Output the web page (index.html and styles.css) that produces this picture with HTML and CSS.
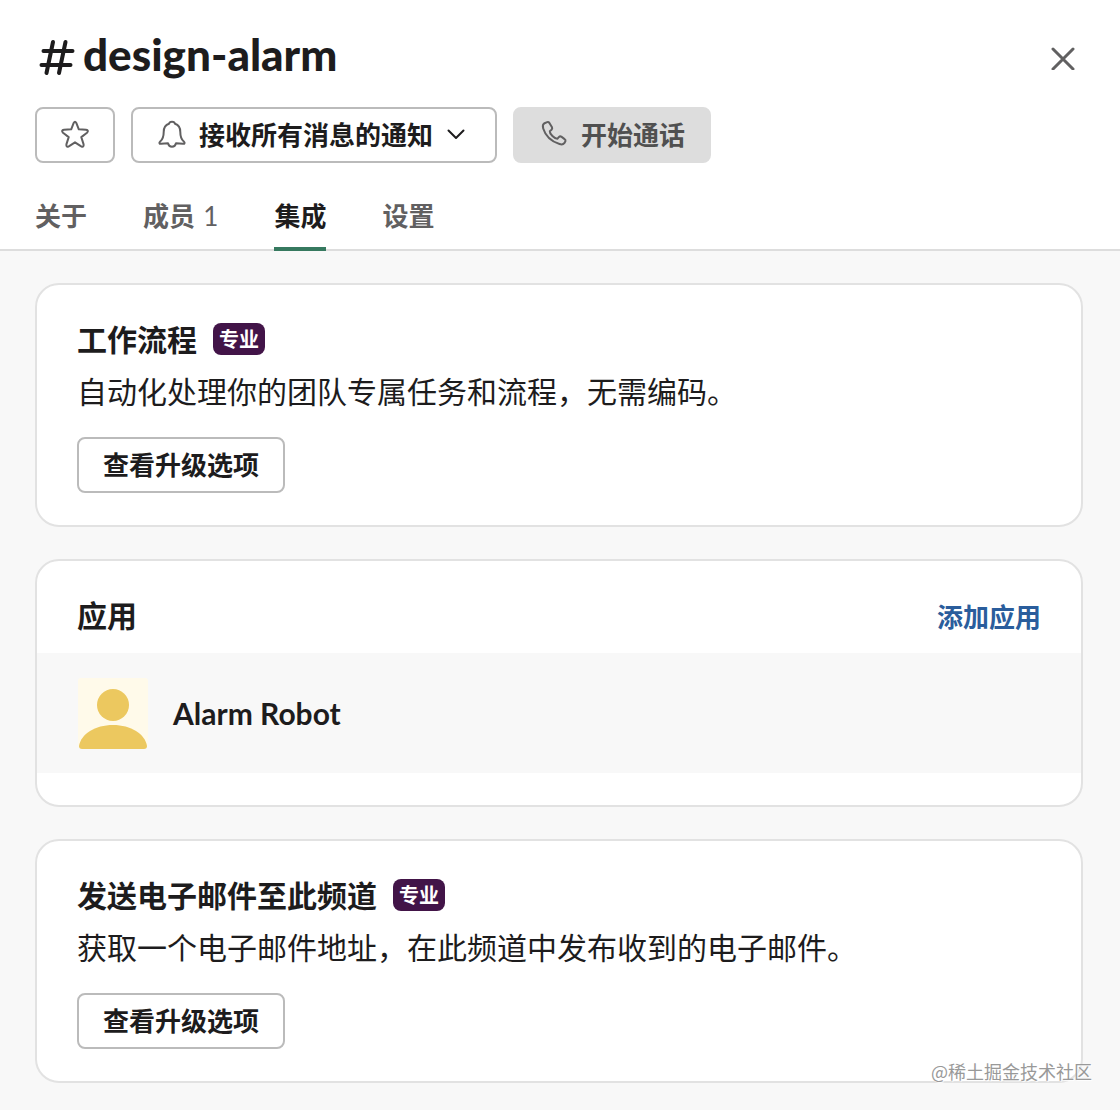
FILE: index.html
```
<!DOCTYPE html>
<html lang="zh-CN">

<head>
    <meta charset="UTF-8">
    <meta name="viewport" content="width=device-width, initial-scale=1.0">
    <title>design-alarm</title>
    <link rel="stylesheet" href="styles.css">
</head>

<body>
    <header class="header">
        <div class="title-row">
            <svg class="hash" viewBox="0 0 40 40" aria-hidden="true">
                <path d="M18 4L11.500 35M30.500 4L24 35M8.500 13H37.500M6.500 27H35.500" />
            </svg>
            <h1>design-alarm</h1>
            <button type="button" class="close" aria-label="关闭">
                <svg viewBox="0 0 24 24" aria-hidden="true">
                    <path d="M2 3L22 23M22 3L2 23" />
                </svg>
            </button>
        </div>

        <div class="actions">
            <button type="button" class="btn btn-star" aria-label="加星标">
                <svg class="icon" viewBox="0 0 30 30" aria-hidden="true">
                    <path d="M13.700 2.900Q15 0.600 16.300 2.900L18.800 9.300L26 9.800Q29.200 10.400 27 12.700L21.300 17.100L23.600 24.400Q24 27.700 21.200 26.300L15 22.300L8.800 26.300Q6 27.700 6.400 24.400L8.700 17.100L3 12.700Q0.800 10.400 4 9.800L11.200 9.300Z" />
                </svg>
            </button>
            <button type="button" class="btn">
                <svg class="icon" viewBox="0 0 30 30" aria-hidden="true">
                    <path d="M12 3.800C12.500 0.900 17.500 0.900 18 3.800C21.800 5 23.300 8.300 23.300 12C23.300 16.500 24.300 19.500 26.800 21.500C28.300 22.800 27.500 24 26 23.800L19 23.300C18.500 25.500 17 26.700 15 26.700C13 26.700 11.500 25.500 11 23.300L4 23.800C2.500 24 1.700 22.800 3.200 21.500C5.700 19.500 6.700 16.500 6.700 12C6.700 8.300 8.200 5 12 3.800Z" />
                </svg>
                接收所有消息的通知
                <svg class="chevron" viewBox="0 0 26 26" aria-hidden="true">
                    <path d="M3.500 8.500L11 16L18.500 8.500" />
                </svg>
            </button>
            <button type="button" class="btn btn-call" disabled>
                <svg class="icon" viewBox="0 0 30 30" aria-hidden="true">
                    <path d="M5.500 3.200L8.200 2.100C9 1.800 9.900 2.200 10.400 2.900L13 7.200C13.400 8.100 13.200 9 12.500 9.700L10.800 11.200C10.600 14 15.500 18.800 18.300 18.800L19.800 17.100C20.500 16.400 21.400 16.200 22.300 16.600L25.600 19.100C26.400 19.600 26.700 20.500 26.400 21.300L25.300 23.200C24.300 24.500 22.500 24.700 20.500 24C12.500 21.500 6.500 16 4.200 8.500C3.500 6.200 3.900 4.200 5.500 3.200Z" />
                </svg>
                开始通话
            </button>
        </div>

        <nav class="tabs">
            <a href="#about">关于</a>
            <a href="#members">成员 <span>1</span></a>
            <a href="#integrations" class="active" aria-current="page">集成</a>
            <a href="#settings">设置</a>
        </nav>
    </header>

    <main class="content">
        <section class="card">
            <div class="card-head">
                <h2>工作流程</h2>
                <span class="badge">专业</span>
            </div>
            <p>自动化处理你的团队专属任务和流程，无需编码。</p>
            <button type="button" class="btn">查看升级选项</button>
        </section>

        <section class="card">
            <div class="card-head">
                <h2>应用</h2>
                <a href="#add-app" class="add-app">添加应用</a>
            </div>
            <div class="app-row">
                <svg class="avatar" viewBox="0 0 72 72" aria-hidden="true">
                    <rect x="1" y="1" width="70" height="70" rx="3" fill="#fffaea" />
                    <circle cx="36" cy="28" r="16" fill="#ecc85f" />
                    <path d="M2 69C4 57 18 48 36 48C54 48 68 57 70 69Q70 72 67 72H5Q2 72 2 69Z" fill="#ecc85f" />
                </svg>
                <h3>Alarm Robot</h3>
            </div>
        </section>

        <section class="card">
            <div class="card-head">
                <h2>发送电子邮件至此频道</h2>
                <span class="badge">专业</span>
            </div>
            <p>获取一个电子邮件地址，在此频道中发布收到的电子邮件。</p>
            <button type="button" class="btn">查看升级选项</button>
        </section>
    </main>

    <div class="watermark">@稀土掘金技术社区</div>
</body>

</html>
```

FILE: styles.css
```
* {
    box-sizing: border-box;
}

body {
    margin: 0;
    min-height: 100vh;
    background-color: #f8f8f8;
    color: #1d1c1d;
    font-family: Lato, "Noto Sans CJK SC", sans-serif;
}

h1,
h2,
h3,
p {
    margin: 0;
}

a {
    text-decoration: none;
}

svg {
    flex: none;
    fill: none;
    stroke-linecap: round;
    stroke-linejoin: round;
}

.header {
    padding: 28px 37px 0 35px;
    background-color: #fff;
    border-bottom: 2px solid #ddd;
}

.title-row {
    display: flex;
    align-items: center;
    gap: 8px;
    height: 60px;
}

.hash {
    width: 40px;
    height: 40px;
    stroke: #1d1c1d;
    stroke-width: 4;
}

h1 {
    padding-bottom: 8px;
    font-family: "Lato Black", Lato, sans-serif;
    font-size: 44px;
    font-weight: 900;
    line-height: 52px;
}

.close {
    display: flex;
    margin-left: auto;
    padding: 8px;
    border: none;
    background: none;
    cursor: pointer;
}

.close svg {
    width: 24px;
    height: 24px;
    stroke: #616061;
    stroke-width: 3;
}

.actions {
    display: flex;
    gap: 16px;
    margin-top: 19px;
}

.btn {
    display: inline-flex;
    align-items: center;
    justify-content: center;
    gap: 12px;
    height: 56px;
    padding: 0 24px;
    border: 2px solid #bbb;
    border-radius: 8px;
    background-color: #fff;
    color: #1d1c1d;
    font-family: inherit;
    font-size: 26px;
    font-weight: bold;
    line-height: 36px;
    cursor: pointer;
}

.btn-star {
    width: 80px;
}

.btn-call {
    border-color: #ddd;
    background-color: #ddd;
    color: #505050;
    cursor: default;
}

.icon {
    width: 30px;
    height: 30px;
    stroke: #616061;
    stroke-width: 2;
}

.chevron {
    width: 26px;
    height: 26px;
    stroke: #1d1c1d;
    stroke-width: 2;
}

.tabs {
    display: flex;
    gap: 56px;
    margin-top: 24px;
    margin-bottom: -2px;
}

.tabs a {
    height: 64px;
    border-bottom: 4px solid transparent;
    color: #616061;
    font-size: 26px;
    font-weight: bold;
    line-height: 58px;
}

.tabs span {
    margin-left: 2px;
    font-weight: normal;
}

.tabs .active {
    border-color: #36795f;
    color: #1d1c1d;
}

.content {
    display: flex;
    flex-direction: column;
    gap: 32px;
    padding: 32px 37px 27px 35px;
}

.card {
    padding: 32px 40px;
    border: 2px solid #e2e2e2;
    border-radius: 24px;
    background-color: #fff;
}

.card-head {
    display: flex;
    align-items: center;
    gap: 16px;
}

h2 {
    font-size: 30px;
    line-height: 44px;
}

.badge {
    padding: 0 6px;
    border-radius: 8px;
    background-color: #421448;
    color: #fff;
    font-size: 20px;
    font-weight: bold;
    line-height: 32px;
}

.card p {
    margin: 8px 0 24px;
    font-size: 30px;
    line-height: 44px;
}

.add-app {
    margin-left: auto;
    color: #2a5d9c;
    font-size: 26px;
    font-weight: bold;
}

.app-row {
    display: flex;
    align-items: center;
    gap: 24px;
    margin: 16px -40px 0;
    padding: 24px 40px;
    background-color: #f8f8f8;
}

.avatar {
    width: 72px;
    height: 72px;
}

h3 {
    font-size: 30px;
    line-height: 44px;
}

.watermark {
    position: absolute;
    right: 28px;
    bottom: 26px;
    color: #999;
    font-family: "Noto Sans CJK SC", sans-serif;
    font-size: 18px;
    line-height: 26px;
    text-shadow: 1px 1px 1px #fff;
}
```
